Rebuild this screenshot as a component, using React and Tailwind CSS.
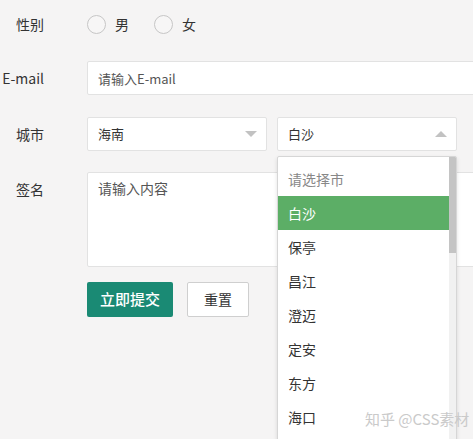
import { useState } from "react";

const CITIES = ["白沙", "保亭", "昌江", "澄迈", "定安", "东方", "海口"];

function Radio({ label }) {
  return (
    <label className="flex items-center">
      <span className="h-[19px] w-[19px] rounded-full border border-[#c6c6c6] bg-[#f7f6f6]" />
      <span className="ml-[9px] text-[14px] text-[#333]">{label}</span>
    </label>
  );
}

function Caret({ up }) {
  return (
    <span
      className={`h-0 w-0 border-x-[6px] border-x-transparent ${
        up ? "border-b-[6px] border-b-[#c2c2c2]" : "border-t-[6px] border-t-[#c2c2c2]"
      }`}
    />
  );
}

function Row({ label, top = false, className = "", children }) {
  return (
    <div className={`flex ${top ? "items-start" : "items-center"} ${className}`}>
      <div className="flex h-[34px] w-[44px] shrink-0 items-center justify-end text-[14px] text-[#333]">
        {label}
      </div>
      <div className="ml-[43px] flex items-start">{children}</div>
    </div>
  );
}

export default function App() {
  const [city] = useState("白沙");

  return (
    <div
      className="relative h-[439px] w-full overflow-hidden bg-[#f5f4f4]"
      style={{ fontFamily: '"Noto Sans CJK SC", "Noto Sans", sans-serif' }}
    >
      <div className="pt-[7px]">
        {/* 性别 */}
        <Row label="性别">
          <div className="flex h-[34px] items-center gap-[25px]">
            <Radio label="男" />
            <Radio label="女" />
          </div>
        </Row>

        {/* E-mail */}
        <Row label="E-mail" className="mt-[20px]">
          <input
            readOnly
            placeholder="请输入E-mail"
            className="h-[34px] w-[420px] rounded-[2px] border border-[#e2e2e2] bg-white px-[10px] text-[13px] text-[#333] outline-none placeholder:text-[#555]"
          />
        </Row>

        {/* 城市 */}
        <Row label="城市" className="mt-[22px]">
          <div className="flex gap-[10px]">
            <div className="flex h-[34px] w-[180px] items-center justify-between rounded-[2px] border border-[#e2e2e2] bg-white pl-[10px] pr-[9px] text-[13px] text-[#333]">
              <span>海南</span>
              <Caret />
            </div>
            <div className="relative">
              <div className="flex h-[34px] w-[180px] items-center justify-between rounded-[2px] border border-[#e2e2e2] bg-white pl-[10px] pr-[9px] text-[13px] text-[#333]">
                <span>{city}</span>
                <Caret up />
              </div>

              {/* 下拉列表 */}
              <div className="absolute left-0 top-[39px] z-10 flex h-[300px] w-[180px] overflow-hidden rounded-[2px] border border-[#d6d6d6] bg-white shadow-[0_2px_4px_rgba(0,0,0,0.12)]">
                <ul className="flex-1 pt-[5px] text-[14px]">
                  <li className="flex h-[34px] items-center pl-[10px] text-[#888]">请选择市</li>
                  {CITIES.map((c) => (
                    <li
                      key={c}
                      className={`flex h-[34px] items-center pl-[10px] ${
                        c === city ? "bg-[#5cae66] text-white" : "text-[#333]"
                      }`}
                    >
                      {c}
                    </li>
                  ))}
                </ul>
                <div className="w-[7px] bg-[#f1f1f1]">
                  <div className="h-[96px] w-full bg-[#c4c4c4]" />
                </div>
              </div>
            </div>
          </div>
        </Row>

        {/* 签名 */}
        <Row label="签名" top className="mt-[21px]">
          <textarea
            readOnly
            placeholder="请输入内容"
            className="h-[95px] w-[420px] resize-none rounded-[2px] border border-[#e2e2e2] bg-white px-[10px] py-[5px] text-[14px] text-[#333] outline-none placeholder:text-[#555]"
          />
        </Row>

        {/* 按钮 */}
        <div className="ml-[87px] mt-[15px] flex gap-[14px]">
          <button className="h-[35px] w-[86px] rounded-[2px] bg-[#1a8a74] text-[15px] font-medium text-white">
            立即提交
          </button>
          <button className="h-[35px] w-[62px] rounded-[2px] border border-[#cfcfcf] bg-white text-[14px] text-[#333]">
            重置
          </button>
        </div>
      </div>

      <div className="absolute left-[365px] top-[408px] z-20 text-[15px] text-[#cacaca]">
        知乎 @CSS素材
      </div>
    </div>
  );
}
